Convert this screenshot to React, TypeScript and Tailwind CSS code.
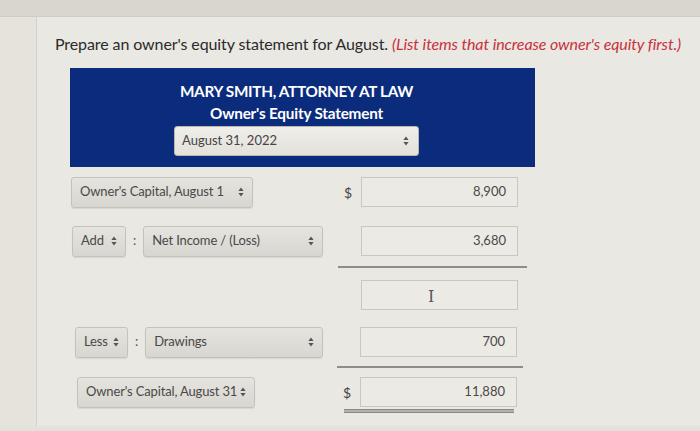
import React from 'react';

const font = { fontFamily: 'Lato, "Open Sans", "Liberation Sans", sans-serif' };

const Arrows = () => (
  <svg width="6" height="10" viewBox="0 0 6 10" className="shrink-0">
    <path d="M3 0.5 L5.6 4 H0.4 Z" fill="#555" />
    <path d="M3 9.5 L5.6 6 H0.4 Z" fill="#555" />
  </svg>
);

type SelectProps = { label: string; width: string; className?: string };

const FakeSelect: React.FC<SelectProps> = ({ label, width, className = '' }) => (
  <div
    className={`flex h-[31px] items-center justify-between rounded-[3px] border border-[#c4c2bb] bg-gradient-to-b from-[#e6e4de] to-[#d8d6d0] pl-[8px] pr-[8px] text-[13px] tracking-[-0.15px] text-[#4a4947] shadow-[0_1px_1px_rgba(0,0,0,0.08)] ${width} ${className}`}
  >
    <span className="whitespace-nowrap">{label}</span>
    <Arrows />
  </div>
);

const Amount: React.FC<{ value?: string; cursor?: boolean }> = ({ value, cursor }) => (
  <div className="relative flex h-[30px] w-[157px] items-center justify-end border border-[#c9c7c0] bg-[#eceae5] pr-[11px] text-[13px] text-[#4a4947]">
    {value}
    {cursor && (
      <span className="absolute left-[66px] top-[4px] text-[16px] text-[#555]" style={{ fontFamily: '"DejaVu Serif", serif' }}>
        I
      </span>
    )}
  </div>
);

export default function App() {
  return (
    <div className="relative h-[431px] w-[700px] overflow-hidden bg-[#e4e1da]" style={font}>
      {/* top strip */}
      <div className="h-[17px] border-b border-[#cfccc5] bg-[#d9d6cf]" />
      <div className="flex h-[409px]">
        <div className="w-[37px] shrink-0 border-r border-[#d3d0c9] bg-[#e6e3dc]" />
        <div className="flex-1 bg-[#eae8e2]">
          <p className="ml-[18px] mt-[15px] whitespace-nowrap text-[16px] leading-[24px] tracking-[-0.1px] text-[#2b2b2b]">
            Prepare an owner's equity statement for August.{' '}
            <span className="italic text-[#c8323d]">(List items that increase owner's equity first.)</span>
          </p>

          <div className="ml-[33px] mt-[12px] w-[465px]">
            {/* header */}
            <div className="flex h-[99px] flex-col items-center bg-[#0b2c7c] pt-[12px] text-white">
              <div className="mr-[12px] text-[15.3px] font-bold leading-[22px] tracking-[-0.3px]">MARY SMITH, ATTORNEY AT LAW</div>
              <div className="mr-[12px] text-[15.3px] font-bold leading-[22px] tracking-[-0.2px]">Owner's Equity Statement</div>
              <div className="mr-[12px] mt-[2px] flex h-[30px] w-[245px] items-center justify-between rounded-[3px] border border-[#b9b7b1] bg-gradient-to-b from-[#efeee9] to-[#e3e1dc] pl-[7px] pr-[9px] text-[13px] text-[#444]">
                <span>August 31, 2022</span>
                <Arrows />
              </div>
            </div>

            {/* row 1 */}
            <div className="mt-[9px] flex h-[32px] items-center">
              <div className="w-[268px] pl-[1px]">
                <FakeSelect label="Owner's Capital, August 1" width="w-[182px]" />
              </div>
              <div className="w-[23px] pl-[6px] text-[14px] text-[#444]">$</div>
              <Amount value="8,900" />
            </div>

            {/* row 2 */}
            <div className="mt-[17px] flex h-[32px] items-center">
              <div className="flex w-[291px] items-center pl-[2px]">
                <FakeSelect label="Add" width="w-[54px]" />
                <span className="mx-[7px] text-[13px] text-[#555]">:</span>
                <FakeSelect label="Net Income / (Loss)" width="w-[180px]" />
              </div>
              <Amount value="3,680" />
            </div>
            <div className="ml-[268px] mt-[9px] h-[2px] w-[189px] bg-[#8e8c87]" />

            {/* row 3 */}
            <div className="mt-[11px] flex h-[32px] items-center">
              <div className="w-[291px]" />
              <Amount cursor />
            </div>

            {/* row 4 */}
            <div className="mt-[15px] flex h-[32px] items-center">
              <div className="flex w-[290px] items-center pl-[5px]">
                <FakeSelect label="Less" width="w-[53px]" />
                <span className="mx-[7px] text-[13px] text-[#555]">:</span>
                <FakeSelect label="Drawings" width="w-[178px]" />
              </div>
              <Amount value="700" />
            </div>
            <div className="ml-[267px] mt-[8px] h-[2px] w-[186px] bg-[#8e8c87]" />

            {/* row 5 */}
            <div className="mt-[8px] flex h-[32px] items-center">
              <div className="w-[268px] pl-[7px]">
                <FakeSelect label="Owner's Capital, August 31" width="w-[178px]" />
              </div>
              <div className="w-[22px] pl-[5px] text-[14px] text-[#444]">$</div>
              <Amount value="11,880" />
            </div>
            <div className="ml-[274px] mt-[1px] h-[4px] w-[170px] border-y-[1.5px] border-[#8a8883] bg-[#b4b2ad]" />
          </div>
        </div>
      </div>
    </div>
  );
}
